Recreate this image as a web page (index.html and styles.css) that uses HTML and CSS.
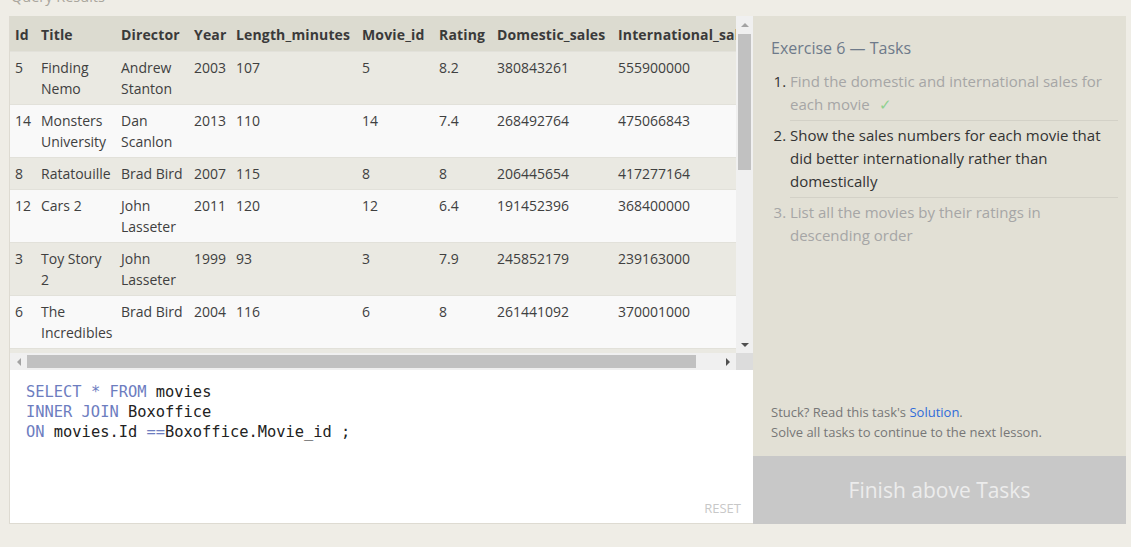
FILE: index.html
```html
<!DOCTYPE html>
<html lang="en">
<head>
<meta charset="utf-8">
<title>SQL Lesson — Exercise 6</title>
<link rel="stylesheet" href="styles.css">
</head>
<body>
<div class="page">
  <div class="results-title">Query Results</div>
  <div class="workspace">
    <section class="left">
      <div class="results">
        <div class="viewport">
          <table>
            <colgroup>
              <col class="c-id"><col class="c-title"><col class="c-dir"><col class="c-year"><col class="c-len"><col class="c-mid"><col class="c-rat"><col class="c-dom"><col class="c-int">
            </colgroup>
            <thead>
              <tr><th>Id</th><th>Title</th><th>Director</th><th>Year</th><th>Length_minutes</th><th>Movie_id</th><th>Rating</th><th>Domestic_sales</th><th>International_sales</th></tr>
            </thead>
            <tbody>
              <tr><td>5</td><td>Finding Nemo</td><td>Andrew Stanton</td><td>2003</td><td>107</td><td>5</td><td>8.2</td><td>380843261</td><td>555900000</td></tr>
              <tr><td>14</td><td>Monsters University</td><td>Dan Scanlon</td><td>2013</td><td>110</td><td>14</td><td>7.4</td><td>268492764</td><td>475066843</td></tr>
              <tr><td>8</td><td>Ratatouille</td><td>Brad Bird</td><td>2007</td><td>115</td><td>8</td><td>8</td><td>206445654</td><td>417277164</td></tr>
              <tr><td>12</td><td>Cars 2</td><td>John Lasseter</td><td>2011</td><td>120</td><td>12</td><td>6.4</td><td>191452396</td><td>368400000</td></tr>
              <tr><td>3</td><td>Toy Story 2</td><td>John Lasseter</td><td>1999</td><td>93</td><td>3</td><td>7.9</td><td>245852179</td><td>239163000</td></tr>
              <tr><td>6</td><td>The Incredibles</td><td>Brad Bird</td><td>2004</td><td>116</td><td>6</td><td>8</td><td>261441092</td><td>370001000</td></tr>
              <tr><td>9</td><td>WALL-E</td><td>Andrew Stanton</td><td>2008</td><td>104</td><td>9</td><td>8.5</td><td>223808164</td><td>297503696</td></tr>
            </tbody>
          </table>
        </div>
        <div class="vbar">
          <div class="sb-btn"><span class="arr arr-up"></span></div>
          <div class="vthumb"></div>
          <div class="sb-btn sb-end"><span class="arr arr-down"></span></div>
        </div>
        <div class="hbar">
          <div class="sb-btn"><span class="arr arr-left"></span></div>
          <div class="hthumb"></div>
          <div class="sb-btn sb-end"><span class="arr arr-right"></span></div>
        </div>
        <div class="corner"></div>
      </div>
      <div class="editor">
<pre class="code"><span class="kw">SELECT</span> <span class="kw">*</span> <span class="kw">FROM</span> movies
<span class="kw">INNER JOIN</span> Boxoffice
<span class="kw">ON</span> movies.Id <span class="kw">==</span>Boxoffice.Movie_id ;</pre>
        <div class="reset">RESET</div>
      </div>
    </section>
    <aside class="tasks">
      <div class="tasks-body">
        <h2 class="tasks-title">Exercise 6 — Tasks</h2>
        <ol class="task-list">
          <li class="task done"><span class="task-text">Find the domestic and international sales for each movie</span><span class="check">✓</span></li>
          <li class="task current">Show the sales numbers for each movie that did better internationally rather than domestically</li>
          <li class="task locked">List all the movies by their ratings in descending order</li>
        </ol>
        <div class="stuck">
          <div>Stuck? Read this task's <a class="solution" href="#">Solution</a>.</div>
          <div>Solve all tasks to continue to the next lesson.</div>
        </div>
      </div>
      <div class="finish">Finish above Tasks</div>
    </aside>
  </div>
</div>
</body>
</html>
```
FILE: styles.css
```css
* { box-sizing: border-box; }
html, body { margin: 0; }
body {
  background: #efede6;
  font-family: "Open Sans", "Noto Sans", sans-serif;
  color: #444;
  overflow: hidden;
}
.page {
  width: 1131px;
  height: 547px;
  padding-left: 9px;
}
.results-title {
  margin-top: -13px;
  height: 29px;
  padding-left: 2px;
  font-size: 14.5px;
  line-height: 20px;
  color: #aaa69d;
}
.workspace {
  display: flex;
  height: 508px;
}

/* left column */
.left {
  width: 744px;
  border-left: 1px solid #dedbd2;
  border-bottom: 1px solid #dedbd2;
  display: flex;
  flex-direction: column;
}
.results {
  display: grid;
  grid-template-columns: 726px 17px;
  grid-template-rows: 337px 17px;
}
.viewport {
  overflow: hidden;
  background: #f9f9f9;
}
table {
  border-collapse: collapse;
  table-layout: fixed;
  width: 753px;
}
.c-id { width: 26px; }
.c-title { width: 80px; }
.c-dir { width: 73px; }
.c-year { width: 42px; }
.c-len { width: 126px; }
.c-mid { width: 77px; }
.c-rat { width: 58px; }
.c-dom { width: 121px; }
.c-int { width: 150px; }
th, td {
  text-align: left;
  vertical-align: top;
  font-size: 14px;
  line-height: 21px;
  padding: 5px 5px 5px;
}
th {
  background: #dcdbd0;
  font-weight: 700;
  color: #3a3a3a;
  white-space: nowrap;
  padding: 8px 5px 6px;
  letter-spacing: 0.15px;
}
td { color: #404040; }
tbody tr { border-top: 1px solid #e2e1da; }
tbody tr:nth-child(odd) { background: #eae9e2; }
tbody tr:nth-child(even) { background: #f9f9f9; }

/* scrollbars */
.vbar {
  background: #f0f0f0;
  display: flex;
  flex-direction: column;
  align-items: center;
}
.hbar {
  background: #f0f0f0;
  display: flex;
  align-items: center;
}
.sb-btn {
  flex: none;
  width: 17px;
  height: 17px;
  display: flex;
  align-items: center;
  justify-content: center;
}
.vbar .sb-end { margin-top: auto; }
.hbar .sb-end { margin-left: auto; }
.vthumb {
  width: 13px;
  height: 136px;
  margin-top: 1px;
  background: #c1c1c1;
}
.hthumb {
  width: 669px;
  height: 13px;
  background: #c1c1c1;
}
.corner { background: #dcdcdc; }
.arr { width: 0; height: 0; display: block; }
.arr-up {
  border-left: 4px solid transparent;
  border-right: 4px solid transparent;
  border-bottom: 4px solid #a3a3a3;
}
.arr-down {
  border-left: 4px solid transparent;
  border-right: 4px solid transparent;
  border-top: 4px solid #505050;
}
.arr-left {
  border-top: 4px solid transparent;
  border-bottom: 4px solid transparent;
  border-right: 4px solid #a3a3a3;
}
.arr-right {
  border-top: 4px solid transparent;
  border-bottom: 4px solid transparent;
  border-left: 4px solid #505050;
}

/* editor */
.editor {
  flex: 1;
  background: #fff;
  display: flex;
  flex-direction: column;
  padding: 12px 12px 6px 16px;
}
.code {
  margin: 0;
  font-family: "DejaVu Sans Mono", "Liberation Mono", monospace;
  font-size: 15.4px;
  line-height: 20px;
  color: #222;
}
.kw { color: #6d7dbf; }
.reset {
  margin-top: auto;
  align-self: flex-end;
  font-size: 13px;
  line-height: 18px;
  color: #c8c8c8;
}

/* tasks */
.tasks {
  width: 373px;
  background: #e2e0d5;
  display: flex;
  flex-direction: column;
}
.tasks-body {
  flex: 1;
  display: flex;
  flex-direction: column;
  padding: 20px 8px 14px 18px;
}
.tasks-title {
  margin: 0;
  font-size: 16px;
  line-height: 24px;
  font-weight: 400;
  color: #6e7a8a;
}
.task-list {
  margin: 7px 0 0;
  padding-left: 19px;
}
.task {
  padding: 3px 0 4px;
  border-bottom: 1px solid #d3d1c7;
  font-size: 15px;
  line-height: 23px;
  color: #333;
}
.task:last-child { border-bottom: 0; }
.task-text { color: #a6a6a6; }
.task.locked { color: #a6a6a6; }
.check {
  color: #8fd08f;
  margin-left: 9px;
}
.stuck {
  margin-top: auto;
  font-size: 13px;
  line-height: 20px;
  color: #777;
}
.solution {
  color: #2f6bd9;
  text-decoration: none;
}
.finish {
  height: 68px;
  flex: none;
  background: #c8c8c8;
  color: #ececec;
  font-size: 21px;
  display: flex;
  align-items: center;
  justify-content: center;
}
```
